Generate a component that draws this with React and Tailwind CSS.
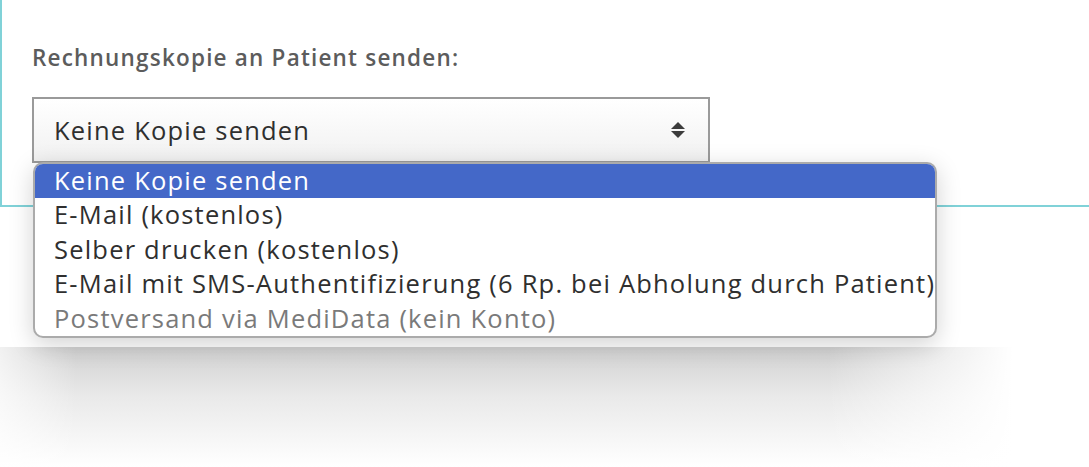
import { useState } from 'react'

const OPTIONS = [
  { label: 'Keine Kopie senden' },
  { label: 'E-Mail (kostenlos)' },
  { label: 'Selber drucken (kostenlos)' },
  { label: 'E-Mail mit SMS-Authentifizierung (6 Rp. bei Abholung durch Patient)' },
  { label: 'Postversand via MediData (kein Konto)', disabled: true },
]

function SortArrows() {
  return (
    <svg width="16" height="18" viewBox="0 0 16 18" className="text-[#3c3c3c]">
      <path d="M8 1 L15 8 H1 Z" fill="currentColor" />
      <path d="M1 10 H15 L8 17 Z" fill="currentColor" />
    </svg>
  )
}

export default function App() {
  const [selected, setSelected] = useState(0)

  return (
    <div className="min-h-[467px] bg-white font-['Open_Sans','Liberation_Sans',sans-serif]">
      {/* Panel */}
      <div className="h-[347px] bg-white">
        <div className="relative h-[207px] border-l-2 border-b-2 border-[#80d2d8] pl-[30px] pt-[43px]">
          <label className="block text-[22.5px] leading-[30px] font-semibold text-[#5c5c5c] tracking-[1.2px]">
            Rechnungskopie an Patient senden:
          </label>

          <div className="mt-[24px] flex h-[66px] w-[678px] items-center justify-between border-2 border-[#9a9a9a] bg-gradient-to-b from-white to-[#f1f1f1] pl-[20px] pr-[22px]">
            <span className="text-[25.5px] tracking-[1.2px] text-[#2f2f2f]">{OPTIONS[selected].label}</span>
            <SortArrows />
          </div>

          {/* Open select list */}
          <ul className="absolute left-[31px] top-[162px] z-10 w-[904px] overflow-hidden rounded-[10px] border-2 border-[#ababab] bg-white shadow-[0_6px_24px_rgba(0,0,0,0.18)]">
            {OPTIONS.map((opt, i) => (
              <li
                key={opt.label}
                onClick={() => !opt.disabled && setSelected(i)}
                className={
                  i === selected
                    ? 'h-[34.4px] whitespace-nowrap bg-[#4468c8] pl-[19px] text-[25.5px] tracking-[1.2px] leading-[33px] text-white'
                    : opt.disabled
                    ? 'h-[34.4px] whitespace-nowrap pl-[19px] text-[25.5px] tracking-[1.2px] leading-[33px] text-[#7a7a7a]'
                    : 'h-[34.4px] whitespace-nowrap pl-[19px] text-[25.5px] tracking-[1.2px] leading-[33px] text-[#2f2f2f]'
                }
              >
                {opt.label}
              </li>
            ))}
          </ul>
        </div>
      </div>

      {/* Shadow below panel */}
      <div className="h-[120px] bg-[linear-gradient(to_right,rgba(255,255,255,0.7),rgba(255,255,255,0)_7%,rgba(255,255,255,0)_76%,#ffffff_93%),linear-gradient(to_bottom,#d0d0d0,#e9e9e9_40%,#ffffff)]" />
    </div>
  )
}
